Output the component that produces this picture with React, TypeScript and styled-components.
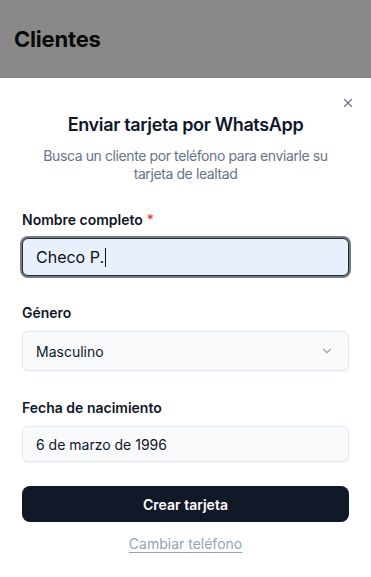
import React from 'react';
import styled, {createGlobalStyle} from 'styled-components';
import {ChevronDown, X} from 'lucide-react';

const GlobalStyle = createGlobalStyle`
  html, body {
    margin: 0;
    padding: 0;
    background: #ffffff;
  }
  body {
    font-family: Inter, "Noto Sans", sans-serif;
    color: #0f172a;
  }
`;

const Page = styled.div`
  width: 371px;
  height: 577px;
  display: flex;
  flex-direction: column;
  overflow: hidden;
`;

const Backdrop = styled.header`
  height: 78px;
  flex-shrink: 0;
  background: #898989;
  padding: 0 14px;
  display: flex;
  align-items: center;
  box-sizing: border-box;
`;

const PageTitle = styled.h1`
  margin: 0;
  font-size: 22px;
  font-weight: 700;
  color: #0a0a0a;
  letter-spacing: -0.2px;
`;

const Sheet = styled.section`
  position: relative;
  flex: 1;
  background: #ffffff;
  padding: 33px 22px 0;
  display: flex;
  flex-direction: column;
`;

const CloseButton = styled.button`
  position: absolute;
  top: 16px;
  right: 14px;
  width: 18px;
  height: 18px;
  padding: 0;
  border: none;
  background: none;
  color: #64748b;
  display: flex;
  align-items: center;
  justify-content: center;
`;

const Heading = styled.div`
  display: flex;
  flex-direction: column;
  align-items: center;
  text-align: center;
  gap: 8px;
`;

const Title = styled.h2`
  margin: 0;
  font-size: 18px;
  line-height: 28px;
  font-weight: 600;
  color: #0f172a;
  letter-spacing: -0.35px;
`;

const Subtitle = styled.p`
  margin: 0;
  font-size: 14px;
  line-height: 17.5px;
  color: #64748b;
  letter-spacing: -0.4px;
  padding: 0 12px;
`;

const Form = styled.form`
  display: flex;
  flex-direction: column;
  margin-top: 28px;
`;

const Field = styled.div<{$last?: boolean}>`
  display: flex;
  flex-direction: column;
  gap: 8px;
  margin-bottom: ${(p) => (p.$last ? '24px' : '27px')};
`;

const Label = styled.label`
  font-size: 14px;
  line-height: 20px;
  font-weight: 600;
  color: #0f172a;
`;

const Required = styled.span`
  color: #ef4444;
`;

const FocusedInput = styled.div`
  height: 38px;
  box-sizing: border-box;
  border: 1px solid #1f2937;
  border-radius: 6px;
  box-shadow: 0 0 0 2px #7a7a7a;
  background: #e8f0fe;
  padding: 0 13px;
  display: flex;
  align-items: center;
  font-size: 16px;
  color: #0f0f0f;
`;

const Caret = styled.span`
  display: inline-block;
  width: 1px;
  height: 19px;
  background: #111;
  margin-left: 1px;
`;

const Box = styled.div<{$height: number}>`
  height: ${(p) => p.$height}px;
  box-sizing: border-box;
  border: 1px solid #e2e8f0;
  border-radius: 6px;
  background: #f8fafc;
  padding: 0 14px 0 13px;
  display: flex;
  align-items: center;
  justify-content: space-between;
  font-size: 14px;
  color: #0f172a;
  box-shadow: 0 1px 1px rgba(15, 23, 42, 0.04);
`;

const SubmitButton = styled.button`
  height: 36px;
  border: none;
  border-radius: 8px;
  background: #111827;
  color: #ffffff;
  font-family: inherit;
  font-size: 14px;
  font-weight: 600;
`;

const LinkButton = styled.button`
  margin-top: 12px;
  align-self: center;
  border: none;
  background: none;
  padding: 0;
  font-family: inherit;
  font-size: 14px;
  line-height: 20px;
  color: #94a3b8;
  text-decoration: underline;
  text-underline-offset: 3px;
`;

export default function App() {
  return (
    <>
      <GlobalStyle />
      <Page>
        <Backdrop>
          <PageTitle>Clientes</PageTitle>
        </Backdrop>
        <Sheet>
          <CloseButton type='button' aria-label='Cerrar'>
            <X size={14} strokeWidth={2} />
          </CloseButton>
          <Heading>
            <Title>Enviar tarjeta por WhatsApp</Title>
            <Subtitle>
              Busca un cliente por teléfono para enviarle su tarjeta de lealtad
            </Subtitle>
          </Heading>
          <Form onSubmit={(e) => e.preventDefault()}>
            <Field>
              <Label>
                Nombre completo <Required>*</Required>
              </Label>
              <FocusedInput>
                Checo P.
                <Caret />
              </FocusedInput>
            </Field>
            <Field>
              <Label>Género</Label>
              <Box $height={40}>
                Masculino
                <ChevronDown size={14} color='#9ca3af' strokeWidth={2} />
              </Box>
            </Field>
            <Field $last>
              <Label>Fecha de nacimiento</Label>
              <Box $height={36}>6 de marzo de 1996</Box>
            </Field>
            <SubmitButton type='submit'>Crear tarjeta</SubmitButton>
            <LinkButton type='button'>Cambiar teléfono</LinkButton>
          </Form>
        </Sheet>
      </Page>
    </>
  );
}
